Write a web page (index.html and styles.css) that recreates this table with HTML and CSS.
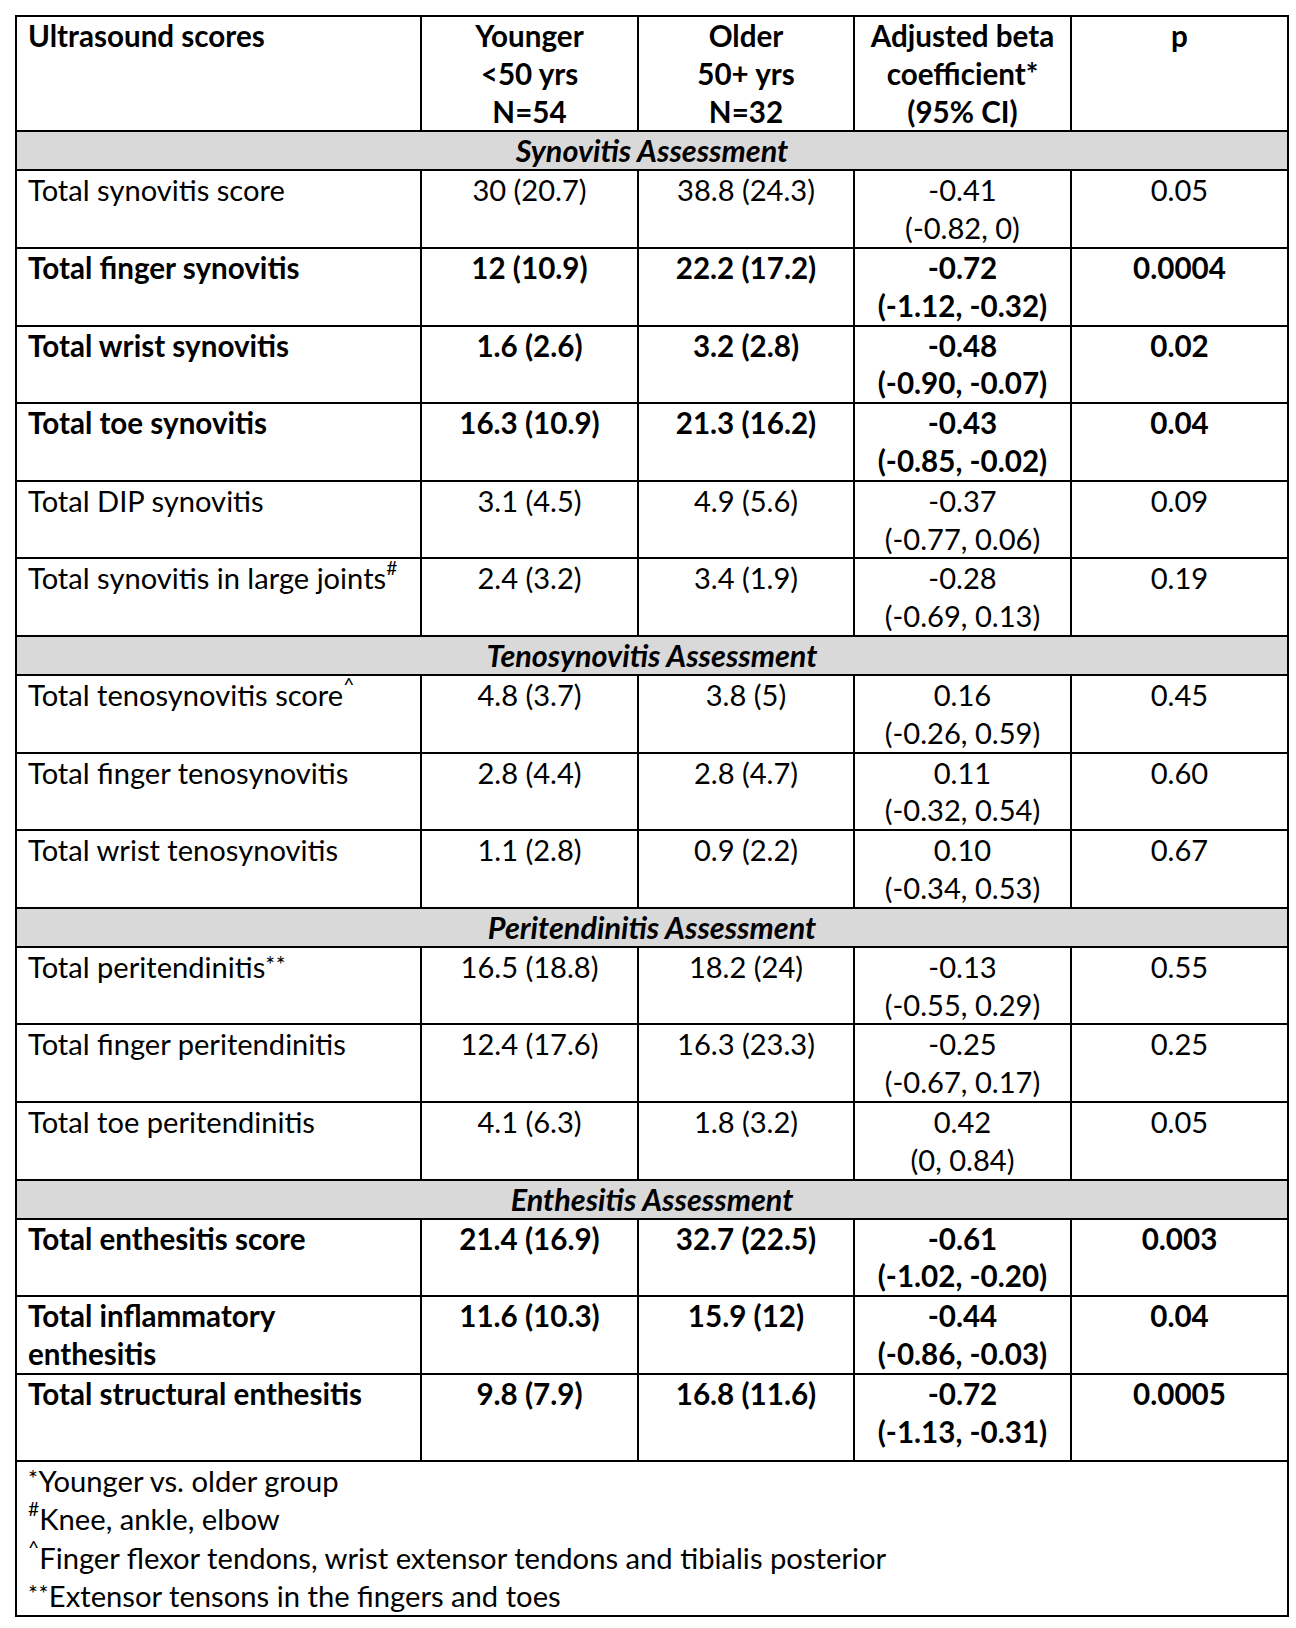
FILE: index.html
```html
<!DOCTYPE html>
<html lang="en">
<head>
<meta charset="utf-8">
<title>Ultrasound scores</title>
<link rel="stylesheet" href="styles.css">
</head>
<body>
<table class="scores">
  <colgroup>
    <col class="c-label">
    <col class="c-num">
    <col class="c-num2">
    <col class="c-num">
    <col class="c-num">
  </colgroup>
  <thead>
    <tr class="head">
      <th class="label">Ultrasound scores</th>
      <th>Younger<br>&lt;50 yrs<br>N=54</th>
      <th>Older<br>50+ yrs<br>N=32</th>
      <th>Adjusted beta<br>coefficient*<br>(95% CI)</th>
      <th>p</th>
    </tr>
  </thead>
  <tbody>
    <tr class="section"><td colspan="5">Synovitis Assessment</td></tr>
    <tr><td class="label">Total synovitis score</td><td>30 (20.7)</td><td>38.8 (24.3)</td><td>-0.41<br>(-0.82, 0)</td><td>0.05</td></tr>
    <tr class="bold"><td class="label">Total finger synovitis</td><td>12 (10.9)</td><td>22.2 (17.2)</td><td>-0.72<br>(-1.12, -0.32)</td><td>0.0004</td></tr>
    <tr class="bold"><td class="label">Total wrist synovitis</td><td>1.6 (2.6)</td><td>3.2 (2.8)</td><td>-0.48<br>(-0.90, -0.07)</td><td>0.02</td></tr>
    <tr class="bold"><td class="label">Total toe synovitis</td><td>16.3 (10.9)</td><td>21.3 (16.2)</td><td>-0.43<br>(-0.85, -0.02)</td><td>0.04</td></tr>
    <tr><td class="label">Total DIP synovitis</td><td>3.1 (4.5)</td><td>4.9 (5.6)</td><td>-0.37<br>(-0.77, 0.06)</td><td>0.09</td></tr>
    <tr><td class="label">Total synovitis in large joints<sup>#</sup></td><td>2.4 (3.2)</td><td>3.4 (1.9)</td><td>-0.28<br>(-0.69, 0.13)</td><td>0.19</td></tr>
    <tr class="section"><td colspan="5">Tenosynovitis Assessment</td></tr>
    <tr><td class="label">Total tenosynovitis score<sup>^</sup></td><td>4.8 (3.7)</td><td>3.8 (5)</td><td>0.16<br>(-0.26, 0.59)</td><td>0.45</td></tr>
    <tr><td class="label">Total finger tenosynovitis</td><td>2.8 (4.4)</td><td>2.8 (4.7)</td><td>0.11<br>(-0.32, 0.54)</td><td>0.60</td></tr>
    <tr><td class="label">Total wrist tenosynovitis</td><td>1.1 (2.8)</td><td>0.9 (2.2)</td><td>0.10<br>(-0.34, 0.53)</td><td>0.67</td></tr>
    <tr class="section"><td colspan="5">Peritendinitis Assessment</td></tr>
    <tr><td class="label">Total peritendinitis<sup class="ast">**</sup></td><td>16.5 (18.8)</td><td>18.2 (24)</td><td>-0.13<br>(-0.55, 0.29)</td><td>0.55</td></tr>
    <tr><td class="label">Total finger peritendinitis</td><td>12.4 (17.6)</td><td>16.3 (23.3)</td><td>-0.25<br>(-0.67, 0.17)</td><td>0.25</td></tr>
    <tr><td class="label">Total toe peritendinitis</td><td>4.1 (6.3)</td><td>1.8 (3.2)</td><td>0.42<br>(0, 0.84)</td><td>0.05</td></tr>
    <tr class="section"><td colspan="5">Enthesitis Assessment</td></tr>
    <tr class="bold"><td class="label">Total enthesitis score</td><td>21.4 (16.9)</td><td>32.7 (22.5)</td><td>-0.61<br>(-1.02, -0.20)</td><td>0.003</td></tr>
    <tr class="bold"><td class="label">Total inflammatory<br>enthesitis</td><td>11.6 (10.3)</td><td>15.9 (12)</td><td>-0.44<br>(-0.86, -0.03)</td><td>0.04</td></tr>
    <tr class="bold last"><td class="label">Total structural enthesitis</td><td>9.8 (7.9)</td><td>16.8 (11.6)</td><td>-0.72<br>(-1.13, -0.31)</td><td>0.0005</td></tr>
    <tr class="notes">
      <td colspan="5">
        <div><sup class="ast">*</sup>Younger vs. older group</div>
        <div><sup>#</sup>Knee, ankle, elbow</div>
        <div><sup>^</sup>Finger flexor tendons, wrist extensor tendons and tibialis posterior</div>
        <div><sup class="ast">**</sup>Extensor tensons in the fingers and toes</div>
      </td>
    </tr>
  </tbody>
</table>
</body>
</html>
```

FILE: styles.css
```css
html, body {
  margin: 0;
  padding: 0;
  background: #ffffff;
}

body {
  padding: 15px 0 0 15px;
  font-family: Lato, "Open Sans", sans-serif;
  color: #000000;
}

.scores {
  table-layout: fixed;
  width: 1274px;
  border-collapse: separate;
  border-spacing: 0;
  border-top: 2px solid #000;
  border-left: 2px solid #000;
  font-size: 29.1px;
  line-height: 37.8px;
}

.c-label { width: 405px; }
.c-num { width: 217px; }
.c-num2 { width: 216px; }

.scores th,
.scores td {
  border-right: 2px solid #000;
  border-bottom: 2px solid #000;
  padding: 0;
  text-align: center;
  vertical-align: top;
  font-weight: 400;
}

.scores th {
  font-weight: 700;
  font-size: 29.6px;
}

.scores .label {
  text-align: left;
  padding-left: 11px;
  padding-right: 4px;
  white-space: nowrap;
}

.bold td {
  font-weight: 700;
  font-size: 29.6px;
}

.section td {
  background: #d9d9d9;
  font-weight: 700;
  font-style: italic;
  font-size: 30.6px;
  line-height: 37px;
}

.last td {
  padding-bottom: 9.4px;
}

sup {
  font-size: 0.66em;
  line-height: 0;
  vertical-align: 0.72em;
}

sup.ast {
  font-size: 0.8em;
  letter-spacing: 0.5px;
  vertical-align: 0.22em;
}

.notes td {
  text-align: left;
  padding-left: 11px;
  font-size: 29.2px;
  line-height: 38.4px;
}
```
